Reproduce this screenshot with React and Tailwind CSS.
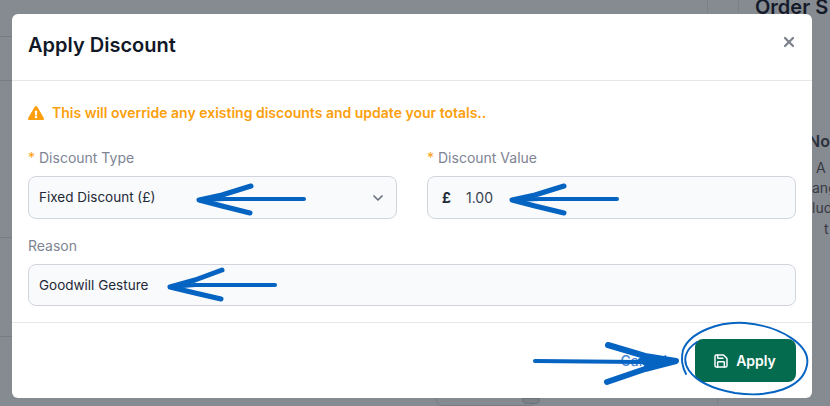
import React from "react";
import { FaExclamationTriangle } from "react-icons/fa";
import { ChevronDown, Save, X } from "lucide-react";

function Req({ children }) {
  return (
    <label className="block h-5 text-[14px] leading-5 text-[#7e8494] mb-2">
      <span className="text-[#fb9f0e] mr-1">*</span>
      {children}
    </label>
  );
}

export default function App() {
  return (
    <div className="relative w-[830px] h-[406px] overflow-hidden bg-[#868a91] pt-[14px] pl-[12px] font-['Inter',sans-serif]">
      {/* page behind the overlay */}
      <div className="absolute left-0 top-[36px] w-[12px] h-px bg-[#777b82]" />
      <div className="absolute left-0 top-[80px] w-[12px] h-px bg-[#777b82]" />
      <div className="absolute left-0 top-[237px] w-[12px] h-px bg-[#777b82]" />
      <div className="absolute left-0 top-[336px] w-[12px] h-px bg-[#777b82]" />
      <div className="absolute left-[707px] top-0 w-px h-[14px] bg-[#7c8087]" />
      <div className="absolute left-[738px] top-0 w-px h-[14px] bg-[#7c8087]" />
      <div className="absolute left-[717px] top-[398px] w-px h-[8px] bg-[#7c8087]" />
      <div className="absolute left-[436px] top-[392px] w-[100px] h-[14px] rounded-b-md border border-[#777b82]" />
      <div className="absolute left-[522px] top-[398px] w-[18px] h-[6px] rounded-b-sm border border-[#6f737a] bg-[#7b7f86]" />
      <div className="absolute left-[755px] top-[-5px] text-[20px] leading-6 font-semibold text-[#141a29] whitespace-nowrap">Order S</div>
      <div className="absolute left-[808px] top-[131px] text-[16px] leading-5 font-semibold text-[#2b303b] whitespace-nowrap">No</div>
      <div className="absolute left-[816px] top-[158px] text-[14px] leading-5 text-[#373b45] whitespace-nowrap">A</div>
      <div className="absolute left-[812px] top-[178px] text-[14px] leading-5 text-[#373b45] whitespace-nowrap">ang</div>
      <div className="absolute left-[812px] top-[198px] text-[14px] leading-5 text-[#373b45] whitespace-nowrap">lud</div>
      <div className="absolute left-[824px] top-[219px] text-[14px] leading-5 text-[#373b45] whitespace-nowrap">t</div>

      {/* modal */}
      <div className="relative w-[800px] h-[384px] bg-white rounded-md flex flex-col">
        <div className="h-[67px] shrink-0 flex items-start justify-between pl-4 pr-4 pt-[17px] border-b border-[#e5e7eb]">
          <h2 className="text-[20px] leading-7 font-semibold text-[#111827]">Apply Discount</h2>
          <X size={16} strokeWidth={3.4} className="text-[#7d828c] mt-[3px] mr-[-1px]" />
        </div>

        <div className="h-[242px] shrink-0 px-4 pt-[22px] border-b border-[#e5e7eb]">
          <div className="flex items-center gap-2 h-5 text-[14px] leading-5 font-semibold text-[#fb9f0e]">
            <FaExclamationTriangle size={16} className="text-[#fb9f0e]" />
            <span>This will override any existing discounts and update your totals..</span>
          </div>

          <div className="flex gap-[30px] mt-[25px]">
            <div className="w-[369px]">
              <Req>Discount Type</Req>
              <div className="h-[43px] rounded-lg border border-[#d1d5db] bg-[#f9fafb] flex items-center justify-between pl-[10px] pr-[10px] text-[13.5px] text-[#1f2937]">
                <span>Fixed Discount (£)</span>
                <ChevronDown size={16} strokeWidth={2.6} className="text-[#6b7280]" />
              </div>
            </div>
            <div className="w-[369px]">
              <Req>Discount Value</Req>
              <div className="h-[43px] rounded-lg border border-[#d1d5db] bg-[#f9fafb] flex items-center pl-[14px] text-[14px] text-[#374151]">
                <span className="font-bold text-[#1f2937] w-[24px]">£</span>
                <span>1.00</span>
              </div>
            </div>
          </div>

          <div className="mt-[17px]">
            <label className="block h-5 text-[14px] leading-5 text-[#7e8494] mb-2">Reason</label>
            <div className="h-[42px] rounded-lg border border-[#d1d5db] bg-[#f9fafb] flex items-center pl-[10px] text-[13.5px] text-[#1f2937]">
              Goodwill Gesture
            </div>
          </div>
        </div>

        <div className="flex-1 flex items-center justify-end gap-[28px] pr-[16px]">
          <span className="text-[14px] font-medium text-[#4a86d8]">Cancel</span>
          <button className="w-[101px] h-[43px] rounded-lg bg-[#056b4f] text-white text-[14px] font-semibold flex items-center justify-center gap-[7px] pr-[2px]">
            <Save size={16} strokeWidth={2.2} />
            Apply
          </button>
        </div>
      </div>

      {/* hand-drawn annotations */}
      <svg className="absolute left-0 top-0 pointer-events-none" width="830" height="406" fill="none" stroke="#0563c1" strokeLinecap="round" strokeLinejoin="round">
        <path d="M304 199 L225 199 L199 200" strokeWidth="4" />
        <path d="M251 186 L222 195 L199 200 L222 206 L250 213" strokeWidth="5" />
        <path d="M617 199 L540 199 L512 200" strokeWidth="4" />
        <path d="M564 186 L535 195 L512 200 L535 206 L564 213" strokeWidth="5" />
        <path d="M275 285 L195 285 L170 287" strokeWidth="4" />
        <path d="M222 270 L195 280 L170 287 L195 293 L221 299" strokeWidth="5" />
        <path d="M535 361 L640 362 L676 361" strokeWidth="4" />
        <path d="M608 345 L645 356 L676 361 L645 369 L607 382" strokeWidth="6" />
        <path d="M640 360 L676 361 L648 366 Z" fill="#0563c1" strokeWidth="4" />
        <path d="M697 342 C 672 358, 688 385, 735 393 C 770 398, 803 388, 807 365 C 811 345, 780 326, 745 323 C 720 321, 690 332, 683 350 C 681 360, 682 366, 686 374" strokeWidth="1.9" />
      </svg>
    </div>
  );
}
